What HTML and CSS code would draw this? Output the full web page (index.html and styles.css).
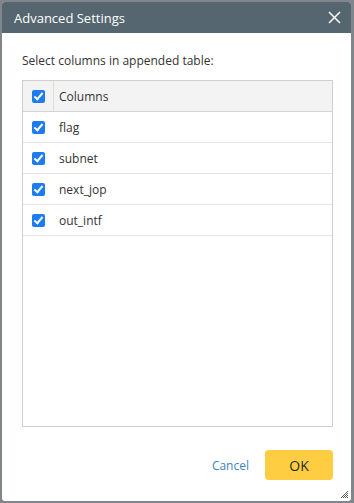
FILE: index.html
```html
<!DOCTYPE html>
<html lang="en">
<head>
  <meta charset="UTF-8">
  <meta name="viewport" content="width=device-width, initial-scale=1.0">
  <title>Advanced Settings</title>
  <link rel="stylesheet" href="styles.css">
</head>
<body>

  <div class="dialog">
    <div class="dialog-header">
      <span class="dialog-title">Advanced Settings</span>
      <button type="button" class="close-btn" aria-label="Close">
        <svg width="13" height="13" viewBox="0 0 13 13">
          <path d="M1 1 L12 12 M12 1 L1 12" stroke="#fff" stroke-width="1.5" fill="none"/>
        </svg>
      </button>
    </div>

    <div class="dialog-body">
      <p class="intro">Select columns in appended table:</p>

      <div class="col-table">
        <div class="row head">
          <div class="cell-check"><span class="check"></span></div>
          <div class="cell-name">Columns</div>
        </div>
        <div class="row">
          <div class="cell-check"><span class="check"></span></div>
          <div class="cell-name">flag</div>
        </div>
        <div class="row">
          <div class="cell-check"><span class="check"></span></div>
          <div class="cell-name">subnet</div>
        </div>
        <div class="row">
          <div class="cell-check"><span class="check"></span></div>
          <div class="cell-name">next_jop</div>
        </div>
        <div class="row">
          <div class="cell-check"><span class="check"></span></div>
          <div class="cell-name">out_intf</div>
        </div>
      </div>
    </div>

    <div class="dialog-footer">
      <button type="button" class="btn-cancel">Cancel</button>
      <button type="button" class="btn-ok">OK</button>
    </div>

    <svg class="grip" width="7" height="7" viewBox="0 0 7 7">
      <path d="M7 0 L0 7 M7 2 L2 7 M7 4 L4 7 M7 6 L6 7" stroke="#333" stroke-width="0.8"/>
    </svg>
  </div>

</body>
</html>
```

FILE: styles.css
```css
html, body {
  height: 100%;
}
body {
  margin: 0;
  padding: 2px 3px 2px 2px;
  box-sizing: border-box;
  background: #80868c;
  font-family: "Open Sans", Arial, sans-serif;
  color: #333;
}
.dialog {
  position: relative;
  height: 100%;
  background: #fff;
  border-radius: 3px;
  display: flex;
  flex-direction: column;
  overflow: hidden;
}
.dialog-header {
  height: 31px;
  background: #556670;
  display: flex;
  align-items: center;
  justify-content: space-between;
  padding: 0 6px 0 12px;
}
.dialog-title {
  color: #fff;
  font-size: 13px;
}
.close-btn {
  background: none;
  border: none;
  padding: 4px;
  display: flex;
  cursor: pointer;
}
.dialog-body {
  flex: 1;
  display: flex;
  flex-direction: column;
  padding: 0 18px 0 20px;
}
.intro {
  margin: 19px 0 10px;
  font-size: 12px;
  line-height: 18px;
}
.col-table {
  flex: 1;
  border: 1px solid #cfcfcf;
}
.row {
  display: flex;
  height: 30px;
  border-bottom: 1px solid #e6e6e6;
  font-size: 12px;
}
.row.head {
  background: #f3f3f3;
  border-bottom-color: #d4d4d4;
}
.cell-check {
  width: 30px;
  display: flex;
  align-items: center;
  justify-content: center;
}
.row.head .cell-check {
  border-right: 1px solid #dcdcdc;
}
.cell-name {
  display: flex;
  align-items: center;
  padding-left: 6px;
}
.row.head .cell-name {
  padding-left: 5px;
}
.check {
  width: 13px;
  height: 13px;
  border-radius: 2px;
  background: #1c7cf0;
  position: relative;
}
.check::after {
  content: "";
  position: absolute;
  left: 4px;
  top: 1px;
  width: 3px;
  height: 7px;
  border: solid #fff;
  border-width: 0 2px 2px 0;
  transform: rotate(40deg);
}
.dialog-footer {
  display: flex;
  align-items: center;
  justify-content: flex-end;
  gap: 16px;
  padding: 23px 18px 21px 0;
}
.btn-cancel {
  background: none;
  border: none;
  color: #3c82c4;
  font-family: inherit;
  font-size: 12px;
  padding: 0;
  cursor: pointer;
}
.btn-ok {
  width: 68px;
  height: 30px;
  background: #ffcd41;
  border: none;
  border-radius: 4px;
  font-family: inherit;
  font-size: 14px;
  color: #2b2b2b;
  cursor: pointer;
}
.grip {
  position: absolute;
  right: 3px;
  bottom: 3px;
}
```
